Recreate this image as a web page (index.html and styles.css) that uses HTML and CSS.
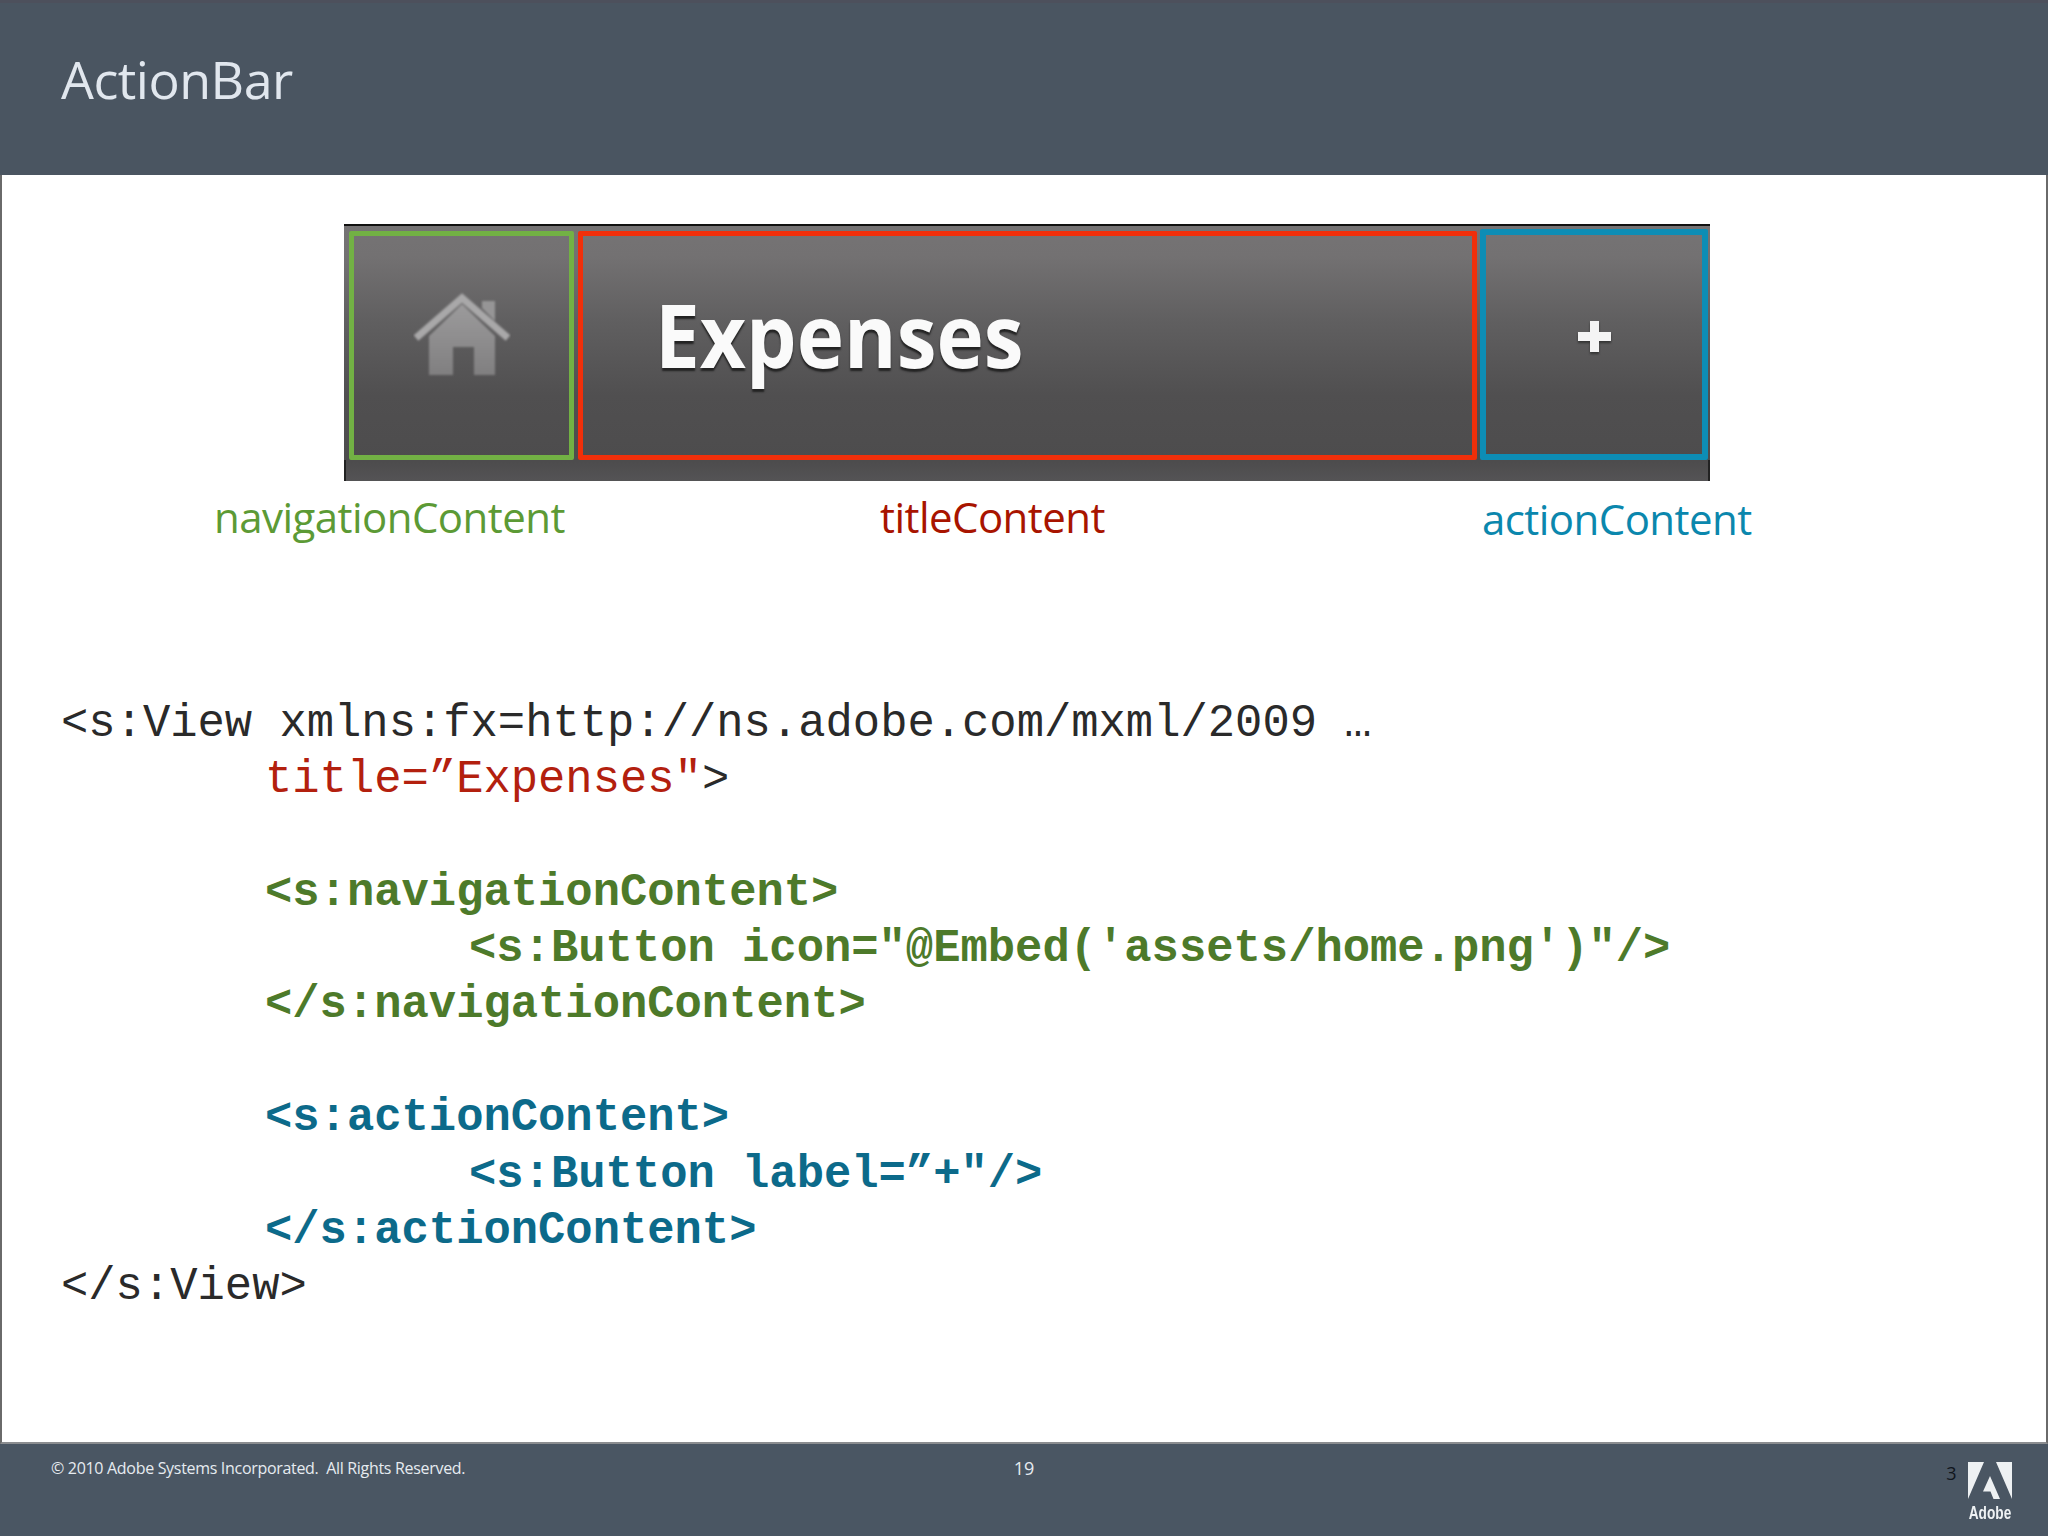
FILE: index.html
```html
<!DOCTYPE html>
<html lang="en">
<head>
<meta charset="utf-8">
<title>ActionBar</title>
<link rel="stylesheet" href="styles.css">
</head>
<body>
<div class="slide">
  <header class="head"><h1 class="head-title">ActionBar</h1></header>
  <main class="main">
    <div class="bar">
      <div class="bar-row">
        <div class="box box-nav">
          <svg class="home" viewBox="0 0 98 87" aria-hidden="true">
            <defs>
              <filter id="soft" x="-10%" y="-10%" width="120%" height="120%"><feGaussianBlur stdDeviation="1"/></filter>
              <linearGradient id="homefill" x1="0" y1="0" x2="0" y2="1">
                <stop offset="0" stop-color="#9c9b9c"/>
                <stop offset="1" stop-color="#807f80"/>
              </linearGradient>
            </defs>
            <g filter="url(#soft)">
              <path d="M69 11h13v20L69 18z" fill="#969596"/>
              <path d="M16 85V46L49 14l33 32v39H61V57H40v28z" fill="url(#homefill)"/>
              <path d="M3 48L49 8l46 40" fill="none" stroke="#a9a8a9" stroke-width="7"/>
            </g>
          </svg>
        </div>
        <div class="box box-title"><span class="bar-title">Expenses</span></div>
        <div class="box box-action">
          <svg class="plus" viewBox="0 0 33 33" aria-hidden="true">
            <path d="M12 1h9v11h12v9H21v11h-9V21H0v-9h12z" fill="#f4f4f4"/>
          </svg>
        </div>
      </div>
      <div class="bar-foot"></div>
    </div>
    <div class="labels">
      <span class="label label-nav">navigationContent</span>
      <span class="label label-title">titleContent</span>
      <span class="label label-action">actionContent</span>
    </div>
    <div class="code">
      <div class="ln">&lt;s:View xmlns:fx=http://ns.adobe.com/mxml/2009 …</div>
      <div class="ln in1"><span class="red">title=”Expenses"</span>&gt;</div>
      <div class="ln">&nbsp;</div>
      <div class="ln in1 grn">&lt;s:navigationContent&gt;</div>
      <div class="ln in2 grn">&lt;s:Button icon="@Embed('assets/home.png')"/&gt;</div>
      <div class="ln in1 grn">&lt;/s:navigationContent&gt;</div>
      <div class="ln">&nbsp;</div>
      <div class="ln in1 blu">&lt;s:actionContent&gt;</div>
      <div class="ln in2 blu">&lt;s:Button label=”+"/&gt;</div>
      <div class="ln in1 blu">&lt;/s:actionContent&gt;</div>
      <div class="ln">&lt;/s:View&gt;</div>
    </div>
  </main>
  <footer class="foot">
    <div class="copy">© 2010 Adobe Systems Incorporated.  All Rights Reserved.</div>
    <div class="page">19</div>
    <div class="brand">
      <span class="num">3</span>
      <div class="logo">
        <svg class="logo-mark" viewBox="0 0 44 37" aria-hidden="true">
          <path d="M0 0h16L0 37zM28 0h16v37zM22 14l10 23h-6.500l-3-7.500h-7.500z" fill="#eef1f3"/>
        </svg>
        <span class="logo-text">Adobe</span>
      </div>
    </div>
  </footer>
</div>
</body>
</html>
```
FILE: styles.css
```css
html, body { margin: 0; padding: 0; background: #fff; }
.slide { width: 2048px; height: 1536px; display: flex; flex-direction: column; overflow: hidden; font-family: "Open Sans", "Noto Sans", sans-serif; }

.head { height: 175px; box-sizing: border-box; background: #4a5561; border-top: 3px solid #4d505c; display: flex; align-items: flex-start; padding: 41px 0 0 61px; }
.head-title { margin: 0; font-size: 52px; line-height: 70px; font-weight: 400; color: #e1e7ee; letter-spacing: -0.5px; }

.main { flex: 1; box-sizing: border-box; background: #fff; border-left: 2px solid #6a6a6a; border-right: 2px solid #6a6a6a; border-bottom: 2px solid #8b8d90; padding-top: 49px; min-height: 0; }

.bar { margin-left: 342px; width: 1366px; height: 257px; display: flex; flex-direction: column; background: linear-gradient(#757374 0, #737172 30px, #605f60 95px, #504f50 170px, #4d4c4d 236px, #555456 257px); border-top: 2px solid #111; box-sizing: border-box; }
.bar-row { display: flex; padding: 5px 2px 0 5px; height: 234px; box-sizing: border-box; }
.bar-foot { flex: 1; border-left: 2px solid #222; border-right: 2px solid #222; }
.box { box-sizing: border-box; border-style: solid; border-width: 5px; display: flex; height: 229px; flex: none; border-radius: 2px; }
.box-nav { width: 225px; border-color: #72b144; justify-content: center; padding-top: 54px; }
.box-title { width: 899px; margin: 0 3px 0 4px; border-color: #f12f0a; border-width: 5.5px; padding: 48px 0 0 72px; }
.box-action { width: 228px; margin-top: -2px; height: 231px; border-color: #0d8db5; border-width: 6px; align-items: flex-start; justify-content: center; padding-top: 85px; }
.home { width: 98px; height: 87px; display: block; }
.plus { width: 33px; height: 33px; display: block; filter: drop-shadow(0 2px 1px #333); }
.bar-title { display: inline-block; height: 100px; font-size: 87px; line-height: 100px; font-weight: 700; color: #fafafa; text-shadow: 0 3px 2px #222; white-space: nowrap; transform: scaleX(0.92); transform-origin: left center; filter: blur(0.5px); }

.labels { display: flex; margin-top: 7px; height: 60px; align-items: flex-start; }
.label { font-size: 42px; line-height: 58px; white-space: nowrap; letter-spacing: -0.55px; }
.label-nav { margin-left: 212px; width: 666px; color: #5c9a35; }
.label-title { width: 602px; color: #a81400; }
.label-action { color: #0b87ad; margin-top: 2px; }

.code { margin-top: 147.5px; padding-left: 59px; font-family: "Liberation Mono", "Courier New", monospace; font-size: 45.5px; line-height: 56.4px; color: #2a2a2a; }
.ln { height: 56.4px; white-space: pre; }
.in1 { padding-left: 204px; }
.in2 { padding-left: 408px; }
.red { color: #b3200e; }
.grn { color: #4d7a2a; font-weight: 700; }
.blu { color: #0c6a8a; font-weight: 700; }

.foot { height: 92px; box-sizing: border-box; background: #4a5663; display: grid; grid-template-columns: 1fr auto 1fr; align-items: start; padding: 12px 38px 0; color: #e6ebf0; }
.copy { font-size: 16px; line-height: 24px; white-space: pre; letter-spacing: -0.31px; padding-left: 13px; }
.page { font-size: 18px; line-height: 24px; }
.brand { display: flex; justify-content: flex-end; gap: 11px; margin: -2px -1.5px 0 0; }
.num { font-size: 18px; line-height: 24px; color: #10151c; margin-top: 7px; }
.logo { display: flex; flex-direction: column; align-items: center; width: 44px; padding-top: 8px; }
.logo-mark { width: 44px; height: 37px; display: block; }
.logo-text { font-family: "Liberation Sans", sans-serif; font-weight: 700; font-size: 18px; line-height: 20px; margin-top: 4px; color: #eef1f3; transform: scaleX(0.76); }
```
